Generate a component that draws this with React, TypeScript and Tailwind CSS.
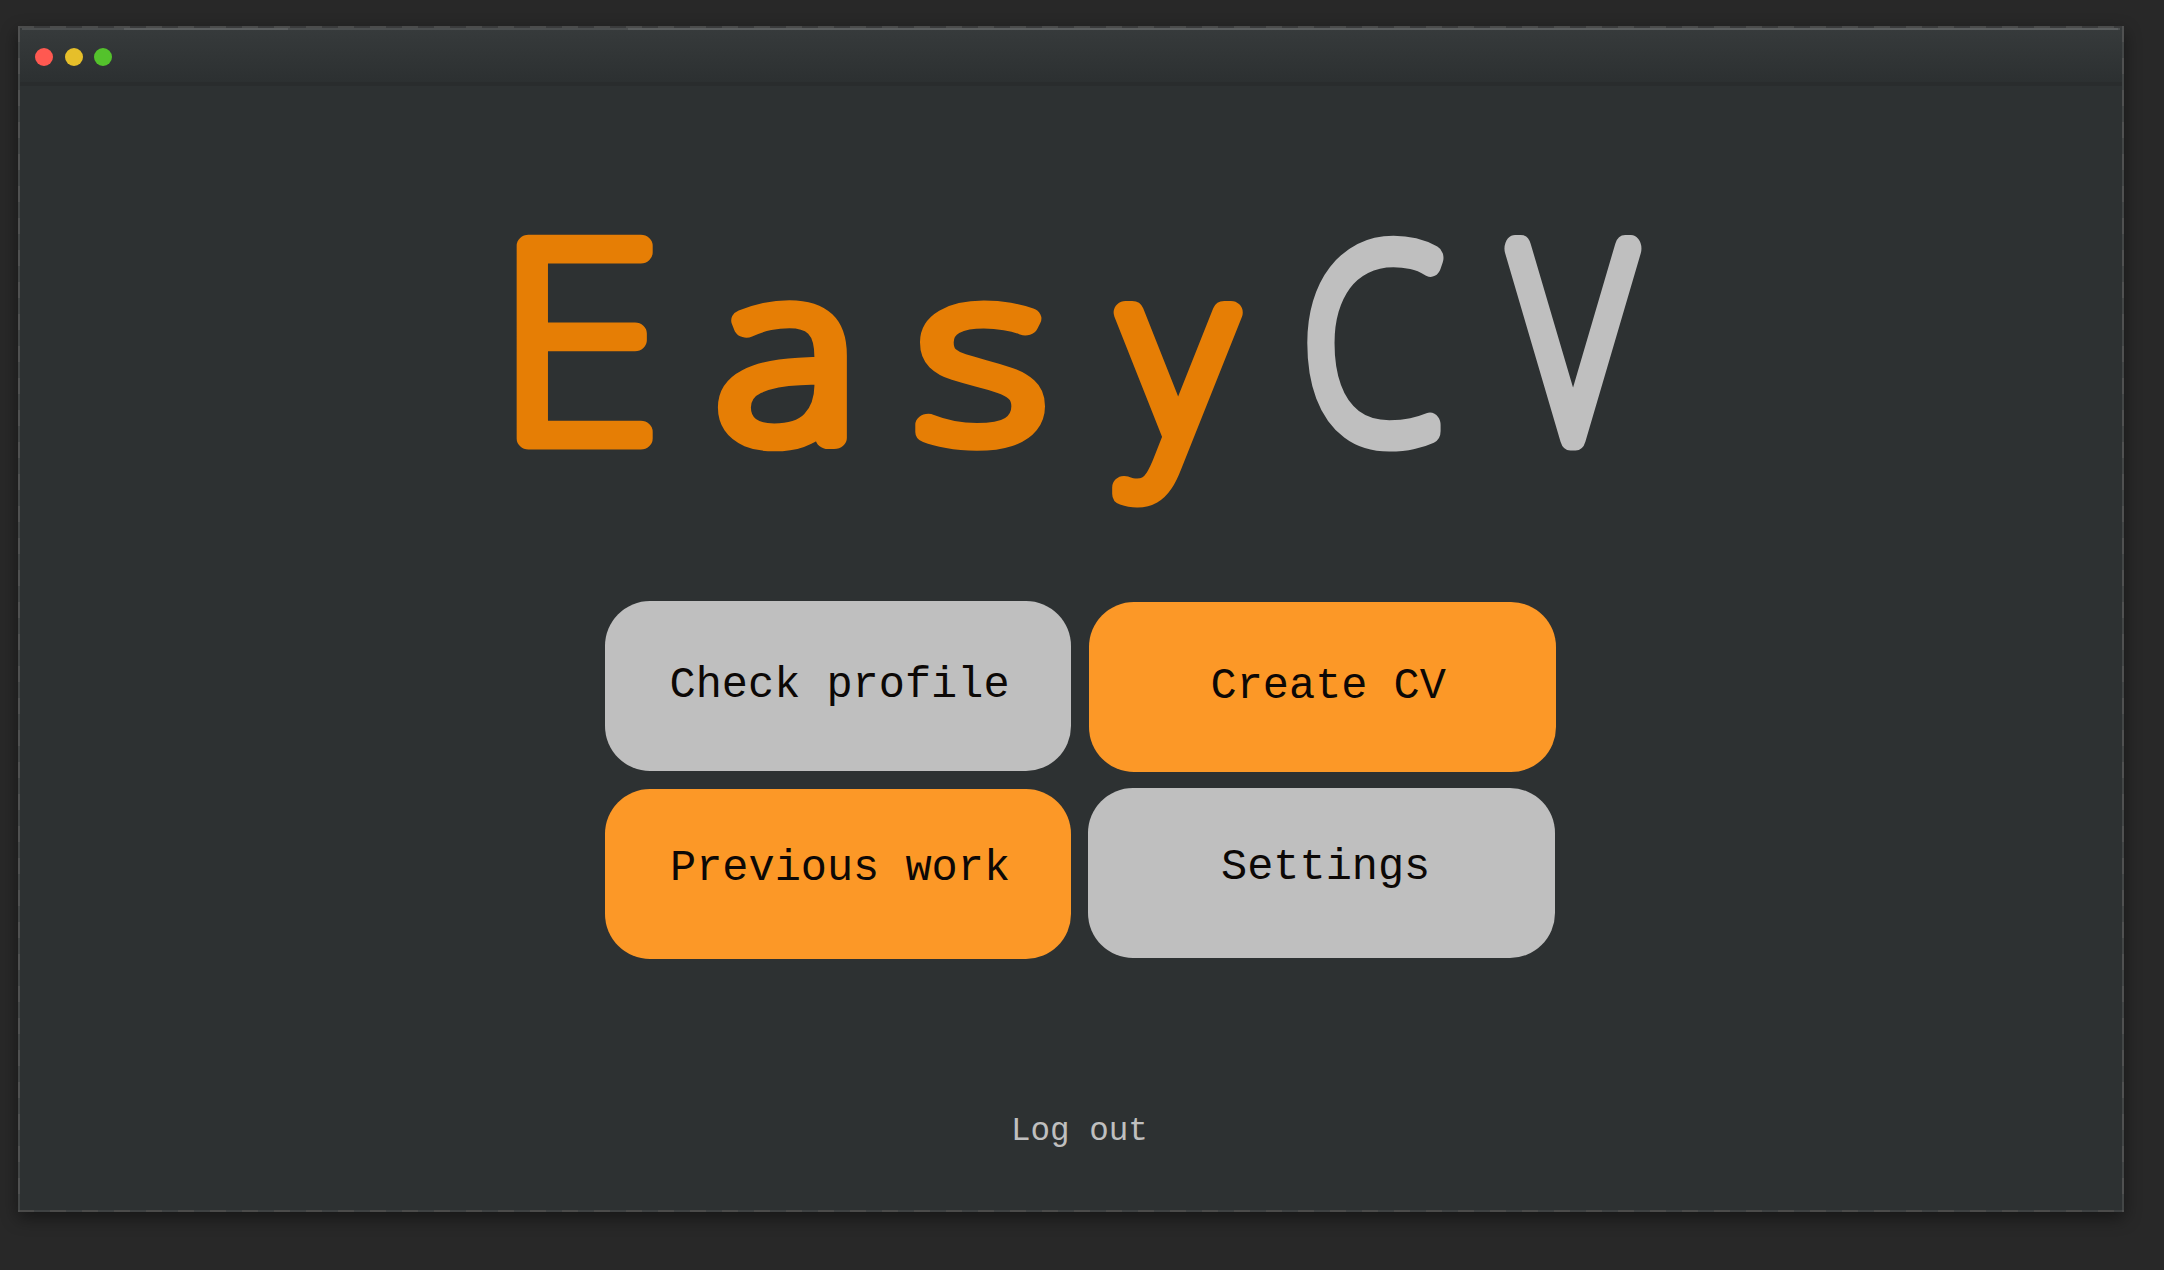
type Letter = { ch: string; x: number; y: number; size: number; sx: number; fill: string; stroke: number };

const ORANGE = "#e67e05";
const SILVER = "#bfbfbf";

const LETTERS: Letter[] = [
  { ch: "E", x: 498.5, y: 438.5, size: 270, sx: 1.08, fill: ORANGE, stroke: 22 },
  { ch: "a", x: 717.5, y: 438, size: 236, sx: 1.155, fill: ORANGE, stroke: 22 },
  { ch: "s", x: 917.5, y: 437.5, size: 234, sx: 1.19, fill: ORANGE, stroke: 22 },
  { ch: "y", x: 1125.5, y: 437.5, size: 238, sx: 1.03, fill: ORANGE, stroke: 23 },
  { ch: "C", x: 1304, y: 436.5, size: 260, sx: 0.85, fill: SILVER, stroke: 25 },
  { ch: "V", x: 1515, y: 437, size: 264, sx: 0.78, fill: SILVER, stroke: 27 },
];

function Logo() {
  return (
    <svg viewBox="480 90 1200 500" className="ml-[462px] mt-[4px] h-[500px] w-[1200px] shrink-0" role="img" aria-label="EasyCV">
      {LETTERS.map((l) => (
        <text
          key={l.ch}
          transform={`translate(${l.x} ${l.y}) scale(${l.sx} 1)`}
          fontFamily="Noto Sans, sans-serif"
          fontWeight={100}
          fontSize={l.size}
          fill={l.fill}
          stroke={l.fill}
          strokeWidth={l.stroke}
          strokeLinejoin="round"
        >
          {l.ch}
        </text>
      ))}
    </svg>
  );
}

const buttonBase =
  "flex w-[466.5px] h-[170px] rounded-[45px] text-[43.6px] leading-[50px] text-[#0c0806] whitespace-pre items-start ";

export default function App() {
  return (
    <div className="flex h-[1270px] w-[2164px] overflow-hidden bg-[#282828] pl-[18px] pt-[26px] font-['Liberation_Mono',monospace]">
      <div className="relative flex h-[1186px] w-[2106px] flex-col bg-[#2d3132] shadow-[0_6px_16px_rgba(0,0,0,0.45)]">
        <header className="flex h-[60px] shrink-0 items-center gap-[11.3px] border-b-4 border-[#292c2d] bg-linear-to-b from-[#373b3c] to-[#2c3031] pl-[17.3px] pt-[6px]">
          <span className="size-[18px] rounded-full bg-[#ff5951]" />
          <span className="size-[18px] rounded-full bg-[#e6bf2a]" />
          <span className="size-[18px] rounded-full bg-[#54c22c]" />
        </header>

        <Logo />

        <main className="ml-[586.5px] mt-[11px] flex gap-[18px]">
          <div className="flex flex-col gap-[17.5px]">
            <button className={buttonBase + "bg-[#bfbfbf] pl-[65px] pt-[60px]"}>Check profile</button>
            <button className={buttonBase + "bg-[#fc9827] pl-[65.5px] pt-[55px]"}>Previous work</button>
          </div>
          <div className="flex flex-col gap-[16px] pt-[1px]">
            <button className={buttonBase + "bg-[#fc9827] pl-[121.5px] pt-[60px]"}>Create CV</button>
            <button className={buttonBase + "-ml-px bg-[#bfbfbf] pl-[133px] pt-[55px]"}>Settings</button>
          </div>
        </main>

        <button className="ml-[993px] mt-[154px] self-start whitespace-pre text-[32.6px] leading-[38px] text-[#bfbfbf]">Log out</button>

        {/* Dashed window frame */}
        <div className="pointer-events-none absolute inset-0">
          <div className="absolute inset-x-0 top-0 h-[2px] bg-[repeating-linear-gradient(90deg,#4b4c4c_0_16px,#3a3b3c_16px_32px)]" />
          <div className="absolute inset-x-[4px] top-[2px] h-[2px] bg-[#4c4f50]" />
          <div className="absolute left-[106px] top-[2px] h-[2px] w-[164px] bg-[#5c5f60]" />
          <div className="absolute right-[6px] top-[2px] h-[2px] w-[1490px] bg-[#5c5f60]" />
          <div className="absolute inset-x-0 bottom-0 h-[2px] bg-[repeating-linear-gradient(90deg,#4b4b4a_0_16px,#3e4142_16px_32px)]" />
          <div className="absolute inset-y-0 left-0 w-[2px] bg-[repeating-linear-gradient(180deg,#505151_0_16px,#434646_16px_32px)]" />
          <div className="absolute inset-y-0 right-0 w-[2px] bg-[repeating-linear-gradient(180deg,#505151_0_16px,#434646_16px_32px)]" />
        </div>
      </div>
    </div>
  );
}
